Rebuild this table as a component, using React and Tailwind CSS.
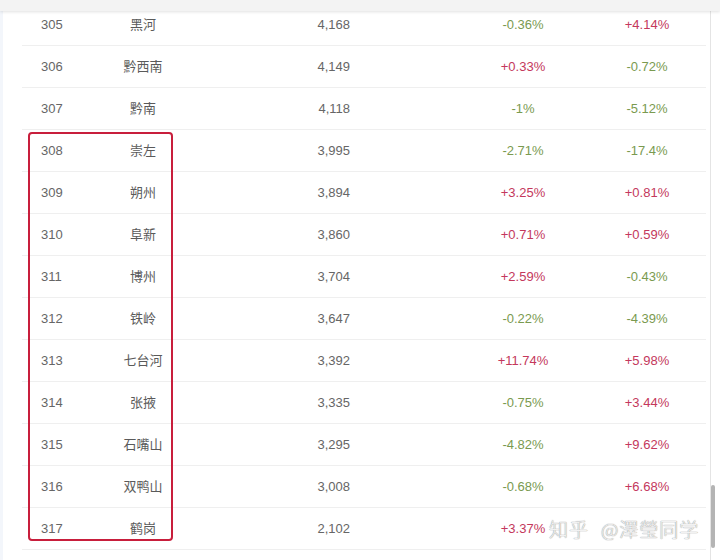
import React from "react";

const rows = [
  ["305", "黑河", "4,168", "-0.36%", "+4.14%"],
  ["306", "黔西南", "4,149", "+0.33%", "-0.72%"],
  ["307", "黔南", "4,118", "-1%", "-5.12%"],
  ["308", "崇左", "3,995", "-2.71%", "-17.4%"],
  ["309", "朔州", "3,894", "+3.25%", "+0.81%"],
  ["310", "阜新", "3,860", "+0.71%", "+0.59%"],
  ["311", "博州", "3,704", "+2.59%", "-0.43%"],
  ["312", "铁岭", "3,647", "-0.22%", "-4.39%"],
  ["313", "七台河", "3,392", "+11.74%", "+5.98%"],
  ["314", "张掖", "3,335", "-0.75%", "+3.44%"],
  ["315", "石嘴山", "3,295", "-4.82%", "+9.62%"],
  ["316", "双鸭山", "3,008", "-0.68%", "+6.68%"],
  ["317", "鹤岗", "2,102", "+3.37%", ""],
];

function Pct({ v }) {
  if (!v) return null;
  const up = v.startsWith("+");
  return (
    <span className={up ? "text-[#c4385c]" : "text-[#7a9a50]"}>{v}</span>
  );
}

export default function App() {
  return (
    <div
      className="relative w-[720px] h-[560px] overflow-hidden bg-white flex flex-col"
      style={{ fontFamily: '"Liberation Sans", "Noto Sans CJK SC", sans-serif' }}
    >
      <div className="h-[11px] bg-[#f3f3f3] shadow-[0_1px_3px_rgba(0,0,0,0.12)] relative z-10 shrink-0" />
      <div className="flex flex-1 min-h-0 border-l-[3px] border-[#f3f6fb]">
        <div className="w-[19px] shrink-0" />
        <div className="w-[684px] overflow-hidden">
          <div className="-mt-[7px]">
            {rows.map((r) => (
              <div
                key={r[0]}
                className="flex items-center h-[42px] border-b border-[#efefef] text-[13px] text-[#666]"
              >
                <div className="w-[78px] pl-[19px]">{r[0]}</div>
                <div className="w-[86px] text-center text-[#5a5a5a]">{r[1]}</div>
                <div className="w-[164px] text-right">{r[2]}</div>
                <div className="w-[100px]" />
                <div className="w-[146px] text-center">
                  <Pct v={r[3]} />
                </div>
                <div className="w-[102px] text-center">
                  <Pct v={r[4]} />
                </div>
              </div>
            ))}
          </div>
        </div>
        <div className="w-[4px] shrink-0" />
        <div className="w-[5px] shrink-0 border-l border-[#e4e4e4] flex flex-col justify-end pb-[12px]">
          <div className="h-[63px] w-[4px] bg-[#b4b4b4] rounded-[2px]" />
        </div>
      </div>

      <div className="absolute left-[28px] top-[132px] w-[145px] h-[409px] border-2 border-[#c81e3c] rounded-[4px] pointer-events-none" />

      <div
        className="absolute left-[549px] top-[515px] flex text-[19px] font-light text-[#f2f2f2] whitespace-nowrap tracking-[1px]"
        style={{
          fontFamily: '"Noto Sans CJK SC", sans-serif',
          textShadow: "0 0 1px #9c9c9c, 0 0 1px #9c9c9c",
        }}
      >
        <span>知乎</span>
        <span className="ml-[12px]">@澤瑩同学</span>
      </div>
    </div>
  );
}
